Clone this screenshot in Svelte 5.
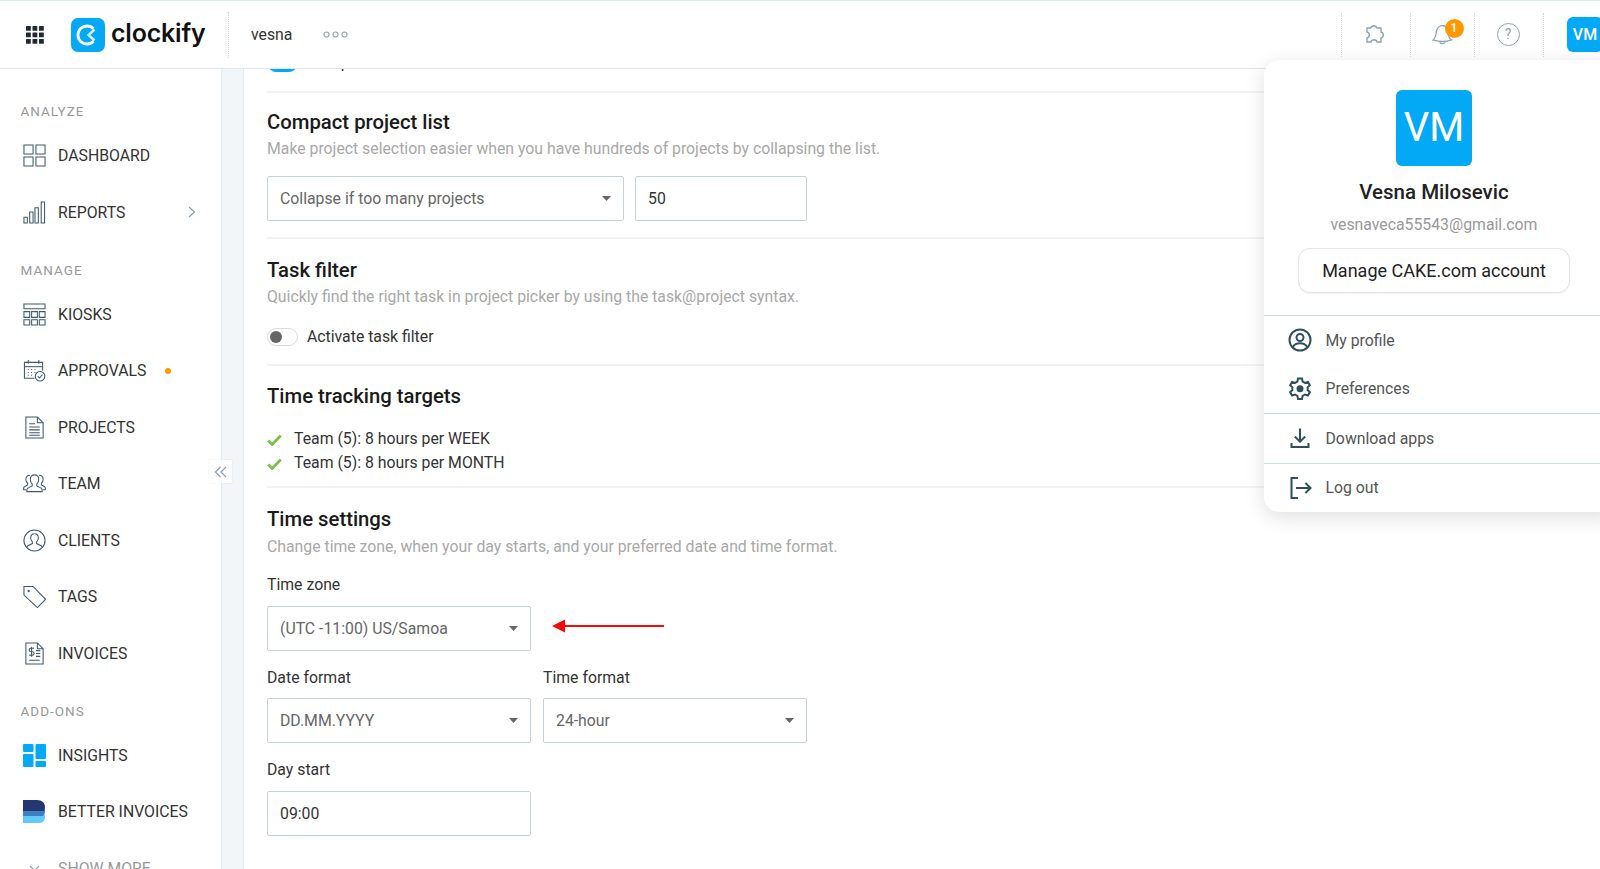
<script>
  const box = (x, y, w, h) => `M${x} ${y}h${w}v${h}h-${w}z`;

  const groups = [
    {
      label: "Analyze",
      items: [
        { name: "Dashboard", icon: [box(1, 1, 9.5, 9.5), box(13.5, 1, 9.5, 9.5), box(1, 13.5, 9.5, 9.5), box(13.5, 13.5, 9.5, 9.5)] },
        { name: "Reports", arrow: true, icon: [box(1, 17, 3.5, 6), box(7, 11.5, 3.5, 11.5), box(12.5, 7, 3.5, 16), box(19, 1, 3.5, 22)] },
      ],
    },
    {
      label: "Manage",
      items: [
        { name: "Kiosks", icon: [box(1, 1, 22, 5), box(1, 9, 6, 6), box(9, 9, 6, 6), box(17, 9, 6, 6), box(1, 17.5, 6, 5.5), box(9, 17.5, 6, 5.5), box(17, 17.5, 6, 5.5)] },
        { name: "Approvals", dot: true, icon: ["M12 20H1.5V3.5h19V12", "M1.5 8h19", "M5.5 1v4M16.5 1v4", "M5 11h1M8.5 11h1M12 11h1M5 14h1M8.5 14h1M12 14h1M5 17h1M8.5 17h1", "M22.8 18a5 5 0 1 1-10 0 5 5 0 0 1 10 0z", "M15.4 18l1.8 1.8 3-3.4"] },
        { name: "Projects", icon: ["M3 1h12l6 6v16H3z", "M15 1v6h6", "M6.5 8h6M6.5 11.5h11M6.5 14.5h11M6.5 17.5h11M6.5 20h11"] },
        { name: "Team", icon: ["M12 3c-2.8 0-4.4 2-4.4 4.8 0 2 .8 3.6 2 4.8v2l-4.6 2.2c-.8.5-1 1.2-1 2.2v1.5h16v-1.5c0-1-.2-1.7-1-2.2l-4.6-2.2v-2c1.200-1.200 2-2.800 2-4.800C16.400 5 14.800 3 12 3z", "M7.400 3.500C5 3 3 4.800 3 7.500c0 1.800.7 3.200 1.800 4.200v1.800L1.500 15.300c-.6.400-.8 1-.8 1.700v1.500h2.500", "M16.600 3.500C19 3 21 4.800 21 7.500c0 1.800-.7 3.200-1.800 4.200v1.800l3.300 1.800c.6.400.8 1 .8 1.700v1.500h-2.500"] },
        { name: "Clients", icon: ["M23 12a11 11 0 1 1-22 0 11 11 0 0 1 22 0z", "M12 5c-2.500 0-4 1.800-4 4.300 0 1.700.7 3.100 1.800 4.100v1.800l-4.800 2.300-.9 1.500", "M12 5c2.500 0 4 1.800 4 4.300 0 1.700-.7 3.100-1.800 4.100v1.800l4.800 2.300.9 1.500"] },
        { name: "Tags", icon: ["M1 1.500h9.500l13 13.500-8.500 8.500L1 10.500z", "M6 5.500a.7.7 0 1 1-.1 0z"] },
        { name: "Invoices", icon: ["M3 1h12l6 6v16H3z", "M15 1v6h6", "M11.500 6.500H8.200a1.600 1.600 0 0 0 0 3.600h1.600a1.600 1.600 0 0 1 0 3.600H6.500M9 5v10.500", "M13.500 9h4.500M13.500 12h4.500M13.500 15h4.500M6.500 19h11"] },
      ],
    },
  ];

  const selects = {
    collapse: "Collapse if too many projects",
    zone: "(UTC -11:00) US/Samoa",
    date: "DD.MM.YYYY",
    time: "24-hour",
  };
</script>

{#snippet caret()}
  <svg class="caret" width="9" height="5" viewBox="0 0 9 5"><path d="M0 0h9L4.500 5z" /></svg>
{/snippet}

{#snippet check()}
  <svg class="check" width="15" height="12" viewBox="0 0 15 12"><path d="M1.200 6.500l4 4L13.800 1.500" /></svg>
{/snippet}

<div class="page">
  <header>
    <div class="apps">
      <svg width="18" height="18" viewBox="0 0 18 18">
        {#each [0, 6.500, 13] as y}
          {#each [0, 6.500, 13] as x}
            <rect {x} {y} width="4.800" height="4.800" rx="0.500" />
          {/each}
        {/each}
      </svg>
    </div>
    <div class="logo">
      <svg width="34" height="34" viewBox="0 0 34 34">
        <rect width="34" height="34" rx="7" fill="#03a9f4" />
        <path d="M22.500 10.800a9 9 0 1 0 0 12.400" fill="none" stroke="#fff" stroke-width="2.800" />
        <path d="M23.500 11.500L17.500 17l6 5.500" fill="none" stroke="#d4f1fd" stroke-width="2.400" />
      </svg>
      <span>clockify</span>
    </div>
    <div class="workspace">
      <span>vesna</span>
      <svg width="25" height="7" viewBox="0 0 25 7">
        <circle cx="3.500" cy="3.500" r="2.500" /><circle cx="12.500" cy="3.500" r="2.500" /><circle cx="21.500" cy="3.500" r="2.500" />
      </svg>
    </div>
    <div class="tools">
      <div class="tool w69">
        <svg class="puzzle" width="28" height="28" viewBox="0 0 24 24">
          <path d="M6 6h3.200a2.700 2.700 0 0 1 5.200 0H18v3.400a2.700 2.700 0 0 1 0 5.200V18h-3.400a2.700 2.700 0 0 0-5.200 0H6v-3.400a2.700 2.700 0 0 0 0-5.200z" />
        </svg>
      </div>
      <div class="tool w64">
        <span class="bell">
          <svg width="26" height="26" viewBox="0 0 24 24">
            <path d="M3 18.500c2.500-2.500 2.500-5 3-8 .6-3.400 3.200-5.700 6.400-5.200 3 .5 4.700 3.200 4.500 6.200-.2 3 .2 5.200 3.100 6.800-4.800 1.700-11.500 1.900-16.500.2z" />
            <path d="M9 20.500c.6 1.600 3.800 1.900 5.200.2" />
          </svg>
          <b>1</b>
        </span>
      </div>
      <div class="tool w69">
        <span class="help">?</span>
      </div>
      <div class="tool last"><span class="mini-avatar">VM</span></div>
    </div>
  </header>

  <div class="body">
    <aside>
      {#each groups as group}
        <div class="group-label">{group.label}</div>
        {#each group.items as item}
          <div class="nav-item">
            <svg class="nav-icon" width="23" height="23" viewBox="0 0 24 24">
              {#each item.icon as d}
                <path {d} />
              {/each}
            </svg>
            <span>{item.name}</span>
            {#if item.dot}<i class="dot"></i>{/if}
            {#if item.arrow}
              <svg class="arrow" width="8" height="12" viewBox="0 0 8 12"><path d="M1 1l5.500 5L1 11" /></svg>
            {/if}
          </div>
        {/each}
      {/each}

      <div class="group-label">Add-ons</div>
      <div class="nav-item">
        <svg class="nav-icon" width="23" height="23" viewBox="0 0 23 23">
          <g class="solid">
            <rect x="0" y="0" width="10.500" height="8" rx="1" />
            <rect x="0" y="10" width="10.500" height="13" rx="1" />
            <rect x="12.500" y="0" width="10.500" height="15" rx="1" />
            <rect x="12.500" y="17" width="10.500" height="6" rx="1" />
          </g>
        </svg>
        <span>Insights</span>
      </div>
      <div class="nav-item">
        <svg class="nav-icon" width="23" height="23" viewBox="0 0 23 23">
          <path class="b3" d="M0 11h16c4 0 6 3 6 6s-2 6-6 6H0z" />
          <path class="b2" d="M0 6h16c4 0 6 2.500 6 5.500 0 2.200-1 3.700-2 4.500H0z" />
          <path class="b1" d="M0 0h14c5 0 8 3 8 7 0 1.500-.4 3-1 4H0z" />
        </svg>
        <span>Better invoices</span>
      </div>
      <div class="nav-item muted">
        <svg class="nav-icon down" width="23" height="23" viewBox="0 0 23 23"><path d="M7 9l4.500 4.500L16 9" /></svg>
        <span>Show more</span>
      </div>
    </aside>

    <div class="gutter">
      <button class="collapse" aria-label="Collapse sidebar">
        <svg width="13" height="12" viewBox="0 0 13 12"><path d="M6.500 1L1.500 6l5 5M12 1L7 6l5 5" /></svg>
      </button>
    </div>

    <main>
      <div class="peek">
        <span class="toggle on"></span>
        <span class="toggle-text">Group</span>
      </div>

      <section class="compact">
        <h2>Compact project list</h2>
        <p>Make project selection easier when you have hundreds of projects by collapsing the list.</p>
        <div class="row">
          <div class="field select w357">{selects.collapse}{@render caret()}</div>
          <div class="field w172">50</div>
        </div>
      </section>

      <section class="filter">
        <h2>Task filter</h2>
        <p>Quickly find the right task in project picker by using the task@project syntax.</p>
        <div class="toggle-row">
          <span class="toggle"></span>
          <span class="toggle-text">Activate task filter</span>
        </div>
      </section>

      <section class="targets">
        <h2>Time tracking targets</h2>
        <ul>
          <li>{@render check()}Team (5): 8 hours per WEEK</li>
          <li>{@render check()}Team (5): 8 hours per MONTH</li>
        </ul>
      </section>

      <section class="settings">
        <h2>Time settings</h2>
        <p>Change time zone, when your day starts, and your preferred date and time format.</p>
        <div class="label first">Time zone</div>
        <div class="row">
          <div class="field select w264">{selects.zone}{@render caret()}</div>
          <svg class="red-arrow" width="112" height="14" viewBox="0 0 112 14">
            <path d="M0 7l13-6.500v5.500h99v2H13v5.500z" />
          </svg>
        </div>
        <div class="pair">
          <div>
            <div class="label">Date format</div>
            <div class="field select w264">{selects.date}{@render caret()}</div>
          </div>
          <div>
            <div class="label">Time format</div>
            <div class="field select w264">{selects.time}{@render caret()}</div>
          </div>
        </div>
        <div class="label">Day start</div>
        <div class="field w264">09:00</div>
      </section>
    </main>
  </div>

  <div class="menu">
    <div class="person">
      <div class="avatar">VM</div>
      <div class="name">Vesna Milosevic</div>
      <div class="email">vesnaveca55543@gmail.com</div>
      <button class="manage">Manage CAKE.com account</button>
    </div>
    <div class="menu-group">
      <div class="menu-item">
        <svg width="24" height="24" viewBox="0 0 24 24">
          <circle cx="12" cy="12" r="10.500" />
          <circle cx="12" cy="9.500" r="3.500" />
          <path d="M4.800 19c1.500-2.600 4-3.800 7.200-3.800s5.700 1.200 7.200 3.800" />
        </svg>
        My profile
      </div>
      <div class="menu-item">
        <svg width="24" height="24" viewBox="0 0 24 24">
          <path d="M10 1.500h4l.6 3 2.400 1.400 2.900-1 2 3.400-2.300 2a7 7 0 0 1 0 2.800l2.300 2-2 3.400-2.900-1-2.400 1.400-.6 3h-4l-.6-3L7 17.500l-2.900 1-2-3.400 2.300-2a7 7 0 0 1 0-2.800l-2.300-2 2-3.400 2.900 1 2.400-1.400z" />
          <circle class="fill" cx="12" cy="11.700" r="3.500" />
        </svg>
        Preferences
      </div>
    </div>
    <div class="menu-group">
      <div class="menu-item">
        <svg width="24" height="24" viewBox="0 0 24 24">
          <path d="M12 2.500v13M6.800 10.500l5.200 5.200 5.200-5.200M3.500 17v4h17v-4" />
        </svg>
        Download apps
      </div>
    </div>
    <div class="menu-group">
      <div class="menu-item">
        <svg width="24" height="24" viewBox="0 0 24 24">
          <path d="M10 2H3.500v20H10M8 12h14.500M17.500 7l5 5-5 5" />
        </svg>
        Log out
      </div>
    </div>
  </div>
</div>

<style>
  :global(body) {
    margin: 0;
    font-family: Roboto, "Liberation Sans", sans-serif;
    color: #222;
    background: #fff;
  }

  .page {
    position: relative;
    height: 869px;
    overflow: hidden;
  }

  header {
    display: flex;
    align-items: center;
    height: 67px;
    border-top: 1px solid #dcebea;
    border-bottom: 1px solid #dde6ec;
    box-sizing: content-box;
  }

  .apps {
    width: 70px;
    display: flex;
    justify-content: center;
    flex: none;
  }
  .apps svg {
    fill: #1f2a33;
  }

  .logo {
    display: flex;
    align-items: center;
    gap: 6px;
    width: 157px;
    flex: none;
    margin-left: 1px;
  }
  .logo span {
    font-family: Inter, sans-serif;
    font-weight: 600;
    font-size: 25px;
    letter-spacing: -0.2px;
    color: #111;
    padding-bottom: 3px;
  }

  .workspace {
    display: flex;
    align-items: center;
    gap: 31px;
    height: 46px;
    padding-left: 22px;
    border-left: 1px dotted #cfd8dd;
    font-size: 15.800px;
    color: #333;
  }
  .workspace svg {
    fill: none;
    stroke: #9aa6ad;
    stroke-width: 1.200;
  }

  .tools {
    display: flex;
    margin-left: auto;
  }
  .tool {
    display: flex;
    align-items: center;
    justify-content: center;
    height: 44px;
    box-sizing: border-box;
    border-left: 1px dotted #cfd8dd;
  }
  .tool svg {
    fill: none;
    stroke: #8ea3b0;
    stroke-width: 1.200;
  }
  .w69 { width: 69px; }
  .w64 { width: 64px; }
  .last {
    width: 57px;
    justify-content: flex-start;
    padding-left: 23px;
  }

  .puzzle {
    margin-right: 4px;
  }

  .bell {
    position: relative;
    display: flex;
    margin-top: -4px;
  }
  .bell b {
    position: absolute;
    top: -1px;
    left: 15px;
    width: 19px;
    height: 19px;
    border-radius: 50%;
    background: #ff9800;
    color: #fff;
    font-size: 12px;
    font-weight: 500;
    line-height: 19px;
    text-align: center;
  }

  .help {
    width: 21px;
    height: 21px;
    margin-right: 2px;
    border: 1.200px solid #8ea3b0;
    border-radius: 50%;
    color: #8ea3b0;
    font-size: 14px;
    line-height: 21px;
    text-align: center;
  }

  .mini-avatar {
    flex: none;
    width: 36px;
    height: 35px;
    border-radius: 6px;
    background: #03a9f4;
    color: #fff;
    font-size: 16px;
    font-weight: 500;
    line-height: 35px;
    text-align: center;
  }

  .body {
    display: flex;
    height: 801px;
  }

  aside {
    width: 221px;
    flex: none;
    padding-top: 13px;
    box-sizing: border-box;
    overflow: hidden;
  }

  .group-label {
    height: 45.500px;
    padding: 21px 0 0 20.500px;
    box-sizing: border-box;
    font-size: 13.500px;
    line-height: 16px;
    letter-spacing: 1px;
    text-transform: uppercase;
    color: #999;
  }

  .nav-item {
    display: flex;
    align-items: center;
    height: 56.500px;
    padding-left: 23px;
    font-size: 15.800px;
    text-transform: uppercase;
    color: #333;
  }
  .nav-item span {
    margin-left: 12px;
  }
  .nav-item.muted {
    color: #999;
  }

  .nav-icon {
    flex: none;
    fill: none;
    stroke: #3d5a6b;
    stroke-width: 1.100;
  }
  .nav-icon.down {
    stroke: #8ea3b0;
  }
  .solid {
    fill: #03a9f4;
    stroke: none;
  }
  .b1, .b2, .b3 {
    stroke: none;
  }
  .b1 { fill: #25376f; }
  .b2 { fill: #3b7fc4; }
  .b3 { fill: #63c9f6; }

  .dot {
    width: 6px;
    height: 6px;
    margin-left: 19px;
    border-radius: 50%;
    background: #ff9800;
  }

  .arrow {
    margin-left: auto;
    margin-right: 25px;
    fill: none;
    stroke: #8ea3b0;
    stroke-width: 1.300;
  }

  .gutter {
    position: relative;
    width: 23px;
    flex: none;
    box-sizing: border-box;
    background: #f2f6f8;
    border-left: 1px solid #e4ebef;
    border-right: 1px solid #e4ebef;
  }

  .collapse {
    position: absolute;
    top: 391px;
    left: -13px;
    width: 23px;
    height: 23px;
    display: flex;
    align-items: center;
    justify-content: center;
    padding: 0;
    border: none;
    background: #fff;
    box-shadow: 0 0 2px rgba(0, 0, 0, 0.08);
  }
  .collapse svg {
    fill: none;
    stroke: #8ea3b0;
    stroke-width: 1.300;
  }

  main {
    flex: 1;
    min-width: 0;
    padding-left: 23px;
    overflow: hidden;
  }

  .peek {
    display: flex;
    align-items: center;
    gap: 9px;
    height: 19px;
    margin-top: -16px;
    padding-bottom: 19px;
  }

  section {
    border-top: 2px solid #eff3f5;
  }
  h2 {
    margin: 0;
    padding-top: 19px;
    font-size: 20.300px;
    font-weight: 500;
    line-height: 24px;
    color: #1a1a1a;
  }
  .compact h2 {
    padding-top: 17px;
  }
  .targets h2 {
    padding-top: 18px;
  }
  p {
    margin: 5px 0 0;
    font-size: 15.800px;
    line-height: 20px;
    color: #a8a8a8;
  }
  .settings p {
    margin-top: 6px;
  }

  .row {
    display: flex;
    align-items: center;
    gap: 11px;
  }
  .compact .row {
    margin-top: 17px;
    padding-bottom: 16px;
  }

  .field {
    position: relative;
    display: flex;
    align-items: center;
    height: 45px;
    padding: 0 12px;
    box-sizing: border-box;
    border: 1px solid #c6d2d9;
    border-radius: 2px;
    font-size: 15.800px;
    color: #333;
  }
  .select {
    color: #666;
  }
  .w357 { width: 357px; }
  .w172 { width: 172px; }
  .w264 { width: 264px; }

  .caret {
    margin-left: auto;
    fill: #666;
  }

  .toggle-row {
    display: flex;
    align-items: center;
    gap: 9px;
    margin-top: 20px;
    padding-bottom: 18px;
  }
  .toggle {
    position: relative;
    width: 31px;
    height: 18px;
    box-sizing: border-box;
    flex: none;
    border: 1px solid #d5dde2;
    border-radius: 9px;
  }
  .toggle::after {
    content: "";
    position: absolute;
    top: 2px;
    left: 2px;
    width: 12px;
    height: 12px;
    border-radius: 50%;
    background: #666;
  }
  .toggle.on {
    background: #03a9f4;
    border-color: #03a9f4;
  }
  .toggle.on::after {
    display: none;
  }
  .toggle-text {
    font-size: 15.800px;
    color: #333;
  }

  ul {
    margin: 19px 0 0;
    padding: 0 0 12px;
    list-style: none;
  }
  li {
    display: flex;
    align-items: center;
    gap: 12px;
    height: 23.700px;
    font-size: 15.800px;
    color: #333;
  }
  .check {
    flex: none;
    fill: none;
    stroke: #7cc04b;
    stroke-width: 2.800;
    margin-top: 2px;
  }

  .label {
    margin: 18px 0 11.500px;
    font-size: 15.800px;
    line-height: 18px;
    color: #333;
  }
  .label.first {
    margin-top: 19px;
  }

  .red-arrow {
    margin-left: 10px;
    margin-top: -4px;
    fill: #f50a0a;
  }

  .pair {
    display: flex;
    gap: 12px;
  }

  .menu {
    position: absolute;
    top: 60px;
    left: 1264px;
    width: 356px;
    height: 452px;
    box-sizing: border-box;
    border-radius: 15px;
    background: #fff;
    box-shadow: 0 5px 20px rgba(0, 0, 0, 0.13);
  }
  .person {
    display: flex;
    flex-direction: column;
    align-items: flex-start;
    height: 255px;
    padding-top: 30px;
    box-sizing: border-box;
  }
  .avatar {
    align-self: flex-start;
    width: 76px;
    height: 76px;
    margin-left: 132px;
    border-radius: 6px;
    background: #03a9f4;
    color: #fff;
    font-size: 40px;
    line-height: 76px;
    text-align: center;
  }
  .name {
    width: 340px;
    text-align: center;
    margin-top: 14px;
    font-size: 20.500px;
    font-weight: 500;
    line-height: 24px;
    color: #222;
  }
  .email {
    width: 340px;
    text-align: center;
    margin-top: 12px;
    font-size: 15.800px;
    line-height: 18px;
    color: #999;
  }
  .manage {
    width: 272px;
    height: 45px;
    margin: 14px 0 0 34px;
    padding: 0;
    border: 1px solid #dfe5e9;
    border-radius: 12px;
    background: #fff;
    font-family: inherit;
    font-size: 18px;
    color: #222;
    box-shadow: 0 1px 2px rgba(0, 0, 0, 0.05);
  }
  .menu-group {
    border-top: 1px solid #cfdbe3;
    padding: 0;
  }
  .menu-item {
    display: flex;
    align-items: center;
    gap: 13.500px;
    height: 48.500px;
    padding-left: 24px;
    font-size: 15.800px;
    color: #555;
  }
  .menu-item svg {
    flex: none;
    fill: none;
    stroke: #2f4f5f;
    stroke-width: 2;
  }
  .menu-item .fill {
    fill: #2f4f5f;
    stroke: none;
  }
</style>
